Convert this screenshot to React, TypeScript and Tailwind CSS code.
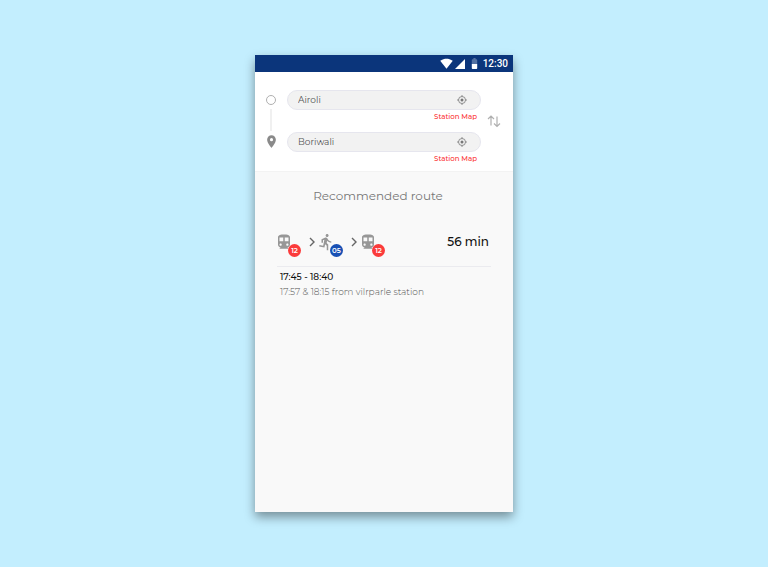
import React from "react";
import {
  MdBattery50,
  MdDirectionsRun,
  MdDirectionsSubway,
  MdPlace,
  MdSignalCellular4Bar,
  MdSignalWifi4Bar,
} from "react-icons/md";

function StatusBar() {
  return (
    <header className="flex h-[17px] items-center justify-end bg-[#0b357b] pr-[5px] text-white">
      <MdSignalWifi4Bar size={13} />
      <MdSignalCellular4Bar size={12} className="ml-px" />
      <MdBattery50 size={13} className="ml-0.5" />
      <time className="ml-0.5 font-[Roboto,sans-serif] text-[10px] leading-3 font-medium">12:30</time>
    </header>
  );
}

function TargetIcon() {
  return (
    <svg viewBox="0 0 10 10" className="size-2.5" fill="none" stroke="#858585" strokeWidth="0.9" aria-hidden="true">
      <circle cx="5" cy="5" r="3.5" />
      <circle cx="5" cy="5" r="1.5" fill="#777" stroke="none" />
      <path d="M5 0v1.500M5 8.500V10M0 5h1.500M8.500 5H10" />
    </svg>
  );
}

function StationField({ label, value }: { label: string; value: string }) {
  return (
    <div className="flex flex-col">
      <div className="flex h-5 items-center rounded-full border border-[#e6e6ee] bg-[#f2f2f2] pr-[13px] pl-2.5">
        <input
          aria-label={label}
          defaultValue={value}
          className="w-0 min-w-0 flex-1 bg-transparent text-[9px] leading-3 text-[#555] outline-none"
        />
        <button type="button" aria-label="Use current location">
          <TargetIcon />
        </button>
      </div>
      <a href="#station-map" className="mt-0.5 mr-1 self-end text-[7px] leading-[10px] font-medium text-[#fb3030]">
        Station Map
      </a>
    </div>
  );
}

function SwapIcon() {
  return (
    <svg viewBox="0 0 14 14" className="size-3.5" fill="none" stroke="#b0b0b0" strokeWidth="1.2" aria-hidden="true">
      <path d="M4 11.500V2M1 5l3-3 3 3M10 2.500v10M7 9.500l3 3 3-3" />
    </svg>
  );
}

function SearchForm() {
  return (
    <form className="flex bg-white pt-[18px] pr-3 pb-[7px] pl-2.5">
      <div className="mr-2.5 flex w-3 flex-col items-center">
        <span className="mt-[5px] size-2.5 shrink-0 rounded-full border border-[#b0b0b0]" />
        <span className="mt-1 h-[22px] w-0.5 bg-[#f0f0f0]" />
        <MdPlace size={15} className="mt-[3px] shrink-0 text-[#8a8a8a]" />
      </div>
      <div className="flex flex-1 flex-col gap-2.5">
        <StationField label="From" value="Airoli" />
        <StationField label="To" value="Boriwali" />
      </div>
      <button type="button" aria-label="Swap stations" className="mt-6 ml-1.5 self-start">
        <SwapIcon />
      </button>
    </form>
  );
}

function Leg({ kind, minutes }: { kind: "train" | "walk"; minutes: string }) {
  const Icon = kind === "train" ? MdDirectionsSubway : MdDirectionsRun;
  return (
    <span className="relative flex size-[18px] items-center justify-center text-[#979797]">
      <Icon size={18} />
      <span
        className={`absolute top-[11px] left-[13px] flex size-[13px] items-center justify-center rounded-full text-[7px] leading-none font-semibold text-white ${
          kind === "train" ? "bg-[#fb3b3b]" : "bg-[#1850b4]"
        }`}
      >
        {minutes}
      </span>
    </span>
  );
}

function Chevron() {
  return (
    <svg viewBox="0 0 6 10" className="mr-0.5 ml-4 h-2.5 w-1.5" fill="none" stroke="#666" strokeWidth="1.4" aria-hidden="true">
      <path d="M1 1l4 4-4 4" />
    </svg>
  );
}

function Route() {
  return (
    <section className="flex-1 border-t border-[#f3f3f3] px-[22px] pt-[15px]">
      <h1 className="pr-3 text-center text-[12px] leading-[18px] font-normal text-[#777]">Recommended route</h1>
      <div className="mt-7 flex h-[34px] items-start justify-between border-b border-[#ebebef] pr-0.5">
        <div className="-ml-0.5 flex items-center">
          <Leg kind="train" minutes="12" />
          <Chevron />
          <Leg kind="walk" minutes="05" />
          <Chevron />
          <Leg kind="train" minutes="12" />
        </div>
        <strong className="text-[12px] leading-[18px] font-medium text-[#111]">56 min</strong>
      </div>
      <p className="mt-0.5 ml-[3px] text-[9px] leading-[15px] font-medium text-[#111]">17:45 - 18:40</p>
      <p className="ml-[3px] text-[9px] leading-[15px] font-light text-[#555]">17:57 &amp; 18:15 from vilrparle station</p>
    </section>
  );
}

export default function App() {
  return (
    <div className="flex min-h-screen justify-center bg-[#c3eefe] py-[55px] font-[Montserrat,Inter,sans-serif]">
      <main className="flex w-full max-w-[258px] flex-col bg-[#f9f9f9] shadow-[0_5px_10px_rgba(0,0,0,0.4)]">
        <StatusBar />
        <SearchForm />
        <Route />
      </main>
    </div>
  );
}
